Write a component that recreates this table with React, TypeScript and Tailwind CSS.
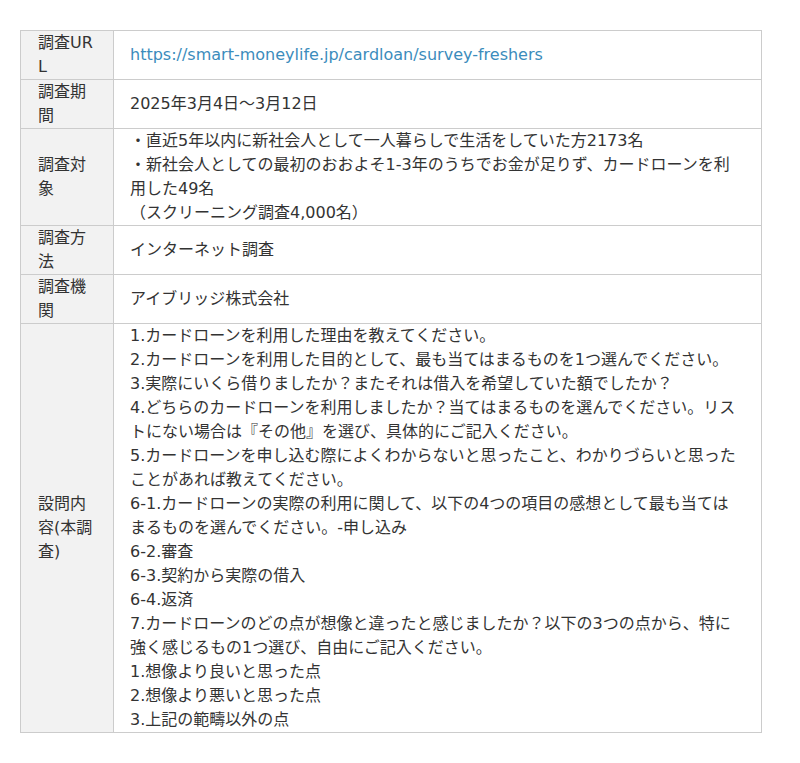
import React from 'react'

const rows: { label: string; body: React.ReactNode }[] = [
  {
    label: '調査URL',
    body: (
      <a href="#" className="text-[#3b8cbc]">
        https://smart-moneylife.jp/cardloan/survey-freshers
      </a>
    ),
  },
  { label: '調査期間', body: '2025年3月4日～3月12日' },
  {
    label: '調査対象',
    body: (
      <>
        ・直近5年以内に新社会人として一人暮らしで生活をしていた方2173名
        <br />
        ・新社会人としての最初のおおよそ1-3年のうちでお金が足りず、カードローンを利用した49名
        <br />
        （スクリーニング調査4,000名）
      </>
    ),
  },
  { label: '調査方法', body: 'インターネット調査' },
  { label: '調査機関', body: 'アイブリッジ株式会社' },
  {
    label: '設問内容(本調査)',
    body: (
      <>
        1.カードローンを利用した理由を教えてください。
        <br />
        2.カードローンを利用した目的として、最も当てはまるものを1つ選んでください。
        <br />
        3.実際にいくら借りましたか？またそれは借入を希望していた額でしたか？
        <br />
        4.どちらのカードローンを利用しましたか？当てはまるものを選んでください。リストにない場合は『その他』を選び、具体的にご記入ください。
        <br />
        5.カードローンを申し込む際によくわからないと思ったこと、わかりづらいと思ったことがあれば教えてください。
        <br />
        6-1.カードローンの実際の利用に関して、以下の4つの項目の感想として最も当てはまるものを選んでください。-申し込み
        <br />
        6-2.審査
        <br />
        6-3.契約から実際の借入
        <br />
        6-4.返済
        <br />
        7.カードローンのどの点が想像と違ったと感じましたか？以下の3つの点から、特に強く感じるもの1つ選び、自由にご記入ください。
        <br />
        1.想像より良いと思った点
        <br />
        2.想像より悪いと思った点
        <br />
        3.上記の範疇以外の点
      </>
    ),
  },
]

export default function App() {
  return (
    <div
      className="min-h-[763px] bg-white pl-[20px] pt-[30px] text-[16px] leading-[24px] text-[#333]"
      style={{ fontFamily: '"DejaVu Sans", "Noto Sans CJK JP", sans-serif' }}
    >
      <table className="w-[742px] table-fixed border-collapse">
        <tbody>
          {rows.map((row) => (
            <tr key={row.label}>
              <td className="w-[93px] border border-[#cccccc] bg-[#f2f2f2] py-0 pl-[17px] pr-[16px] align-middle break-all">
                {row.label}
              </td>
              <td className="border border-[#cccccc] py-0 pl-[16px] pr-[21px] align-middle">{row.body}</td>
            </tr>
          ))}
        </tbody>
      </table>
    </div>
  )
}
